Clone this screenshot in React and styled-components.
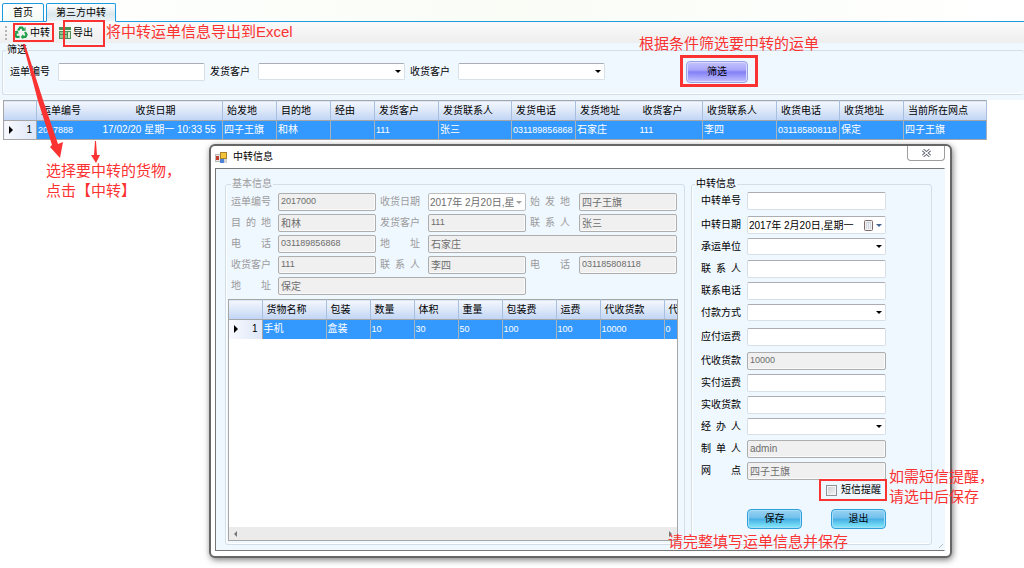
import React from "react";
import styled, { createGlobalStyle, css } from "styled-components";

const red = "#fb3232";

const Global = createGlobalStyle`
  *, *::before, *::after { box-sizing: border-box; }
  html, body { margin: 0; min-height: 100%; background: #fff; }
  body { position: relative; }
  body, input, select, button, table {
    font-family: "Liberation Sans", "Noto Sans CJK SC", sans-serif;
    font-size: 10px;
    line-height: 14px;
    color: #000;
  }
`;

const Page = styled.div`
  position: relative;
  min-height: 100vh;
  overflow: hidden;
`;

const Tabs = styled.nav`
  display: flex;
  gap: 2px;
  height: 22px;
  padding: 3px 2px 0;
  background: linear-gradient(90deg, #fff, #f9fdf6 50%, #fff);
  border-bottom: 1px solid #1c9be0;
`;

const Tab = styled.button`
  height: 19px;
  padding: 0 ${(p) => (p.$active ? "9px" : "10px")};
  border: 1px solid #1c9be0;
  border-bottom-color: ${(p) => (p.$active ? "#f6fafb" : "#1c9be0")};
  border-radius: 2px 2px 0 0;
  background: ${(p) =>
    p.$active ? "linear-gradient(#fff, #dbe7ec 60%, #eaf3f6)" : "linear-gradient(#fff, #f4fbf4)"};
`;

const Toolbar = styled.div`
  display: flex;
  align-items: center;
  gap: 5px;
  height: 21px;
  padding-left: 5px;
  background: linear-gradient(#fafafa, #eeeeee);
`;

const Grip = styled.i`
  width: 2px;
  height: 14px;
  background: repeating-linear-gradient(#b4b4b4 0 2px, transparent 2px 4px);
`;

const Tool = styled.button`
  display: flex;
  align-items: center;
  gap: 2px;
  padding: 0 2px;
  border: 0;
  background: none;
`;

const Group = styled.fieldset`
  min-width: 0;
  margin: 0;
  border: 1px solid #d2dfe8;
  border-radius: 3px;
  box-shadow: inset 0 -1px #fff, inset 1px 0 #fff;
  color: ${(p) => (p.$muted ? "#9b9b9b" : "#000")};

  legend {
    margin-left: 3px;
    padding: 0 1px;
  }
`;

const FilterPane = styled.section`
  padding: 0 0 5px 2px;
  background: #eff7ff;
`;

const FilterGroup = styled(Group)`
  border-right: 0;
  padding: 0 0 4px;
`;

const FilterForm = styled.form`
  display: flex;
  align-items: center;
  padding: 1px 7px 5px;
  height: 33px;
`;

const FilterLabel = styled.label`
  display: grid;
  grid-template-columns: 48px 147px;
  align-items: center;
  margin-right: 5px;
`;

const FilterButton = styled.button`
  width: 62px;
  height: 22px;
  margin-left: 76px;
  border: 1px solid #9aa2e6;
  border-radius: 4px;
  box-shadow: inset 0 0 0 1px #d9d9ff;
  background: linear-gradient(#c4c2fc, #a9a6fb 40%, #8280f6 50%, #c3c1ff);
`;

const box = css`
  width: 100%;
  min-width: 0;
  height: 18px;
  border: 1px solid #d7e0e8;
  border-top-color: #abadb3;
  border-radius: 2px;
  background-color: #fff;
  padding: 0 2px;
  line-height: 15px;
  outline: 0;
`;

const Field = styled.input`
  ${box}
  ${(p) => p.readOnly && css`
    border-color: #aeaeae;
    background-color: #f0f0f0;
    color: #6d6d6d;
    box-shadow: inset -1px -1px #fafafa;
    padding-bottom: 2px;
  `}
  font-size: ${(p) => (p.$num ? "9px" : "10px")};
`;

const SelectWrap = styled.span`
  position: relative;
  display: block;
  min-width: 0;
  height: 17px;

  &::after {
    content: "";
    position: absolute;
    right: 4px;
    top: 7px;
    border: 3px solid transparent;
    border-top-color: #000;
    border-bottom: 0;
  }
`;

const Select = styled.select`
  ${box}
  display: block;
  height: 17px;
  appearance: none;
`;

const DateBox = styled.span`
  ${box}
  display: flex;
  align-items: center;
  gap: ${(p) => (p.$muted ? "0" : "3px")};
  padding: 0 1px;
  color: ${(p) => (p.$muted ? "#6d6d6d" : "#000")};
  border-color: ${(p) => (p.$muted ? "#bdbdbd" : "")};

  input {
    flex: 1;
    min-width: 0;
    padding: 0;
    border: 0;
    background: none;
    color: inherit;
    line-height: 15px;
    outline: 0;
  }

  &::after {
    content: "";
    margin-right: 2px;
    border: 3px solid transparent;
    border-top-color: ${(p) => (p.$muted ? "#a0a0a0" : "#456391")};
    border-bottom: 0;
  }
`;

const Table = styled.table`
  width: ${(p) => p.$width}px;
  table-layout: fixed;
  border-collapse: collapse;
  border: 1px solid #a6a6a6;

  th, td {
    height: 19px;
    padding: 0 0 0 2px;
    overflow: hidden;
    white-space: nowrap;
    text-align: left;
    font-weight: 400;
  }
  thead th {
    height: 20px;
    padding-left: 4px;
    border: solid #a9bfe0;
    border-width: 1px 1px 1px 0;
    border-top-color: #a6a6a6;
    border-bottom-color: #a6a6a6;
    background: linear-gradient(#f4f7fd, #d9e5f8 55%, #bfd4f6);
  }
  td {
    padding-left: 1px;
    border-right: 1px solid #a9b3bd;
    background: #3399ff;
    color: #fff;
  }
  thead th.joined, td.joined { border-right: 0; }
  thead th.date { padding-left: 34px; }
  tbody th {
    border-right: 1px solid #a6a6a6;
    background: linear-gradient(90deg, #f7f9fd, #dde6f8);
    text-align: right;
    padding-right: 4px;
  }
`;

const Num = styled.span`
  font-size: 9px;
`;

const RowMark = styled.i`
  float: left;
  margin: 3px 0 0 3px;
  border: 4px solid transparent;
  border-left-color: #000;
  border-right: 0;
`;

const MainGrid = styled.main`
  padding-left: 3px;
`;

const Dialog = styled.section`
  position: absolute;
  top: 144px;
  left: 209px;
  width: 743px;
  padding: 0 5px 5px 4px;
  border: 2px solid #666;
  border-radius: 6px;
  background: #fff;
  box-shadow: 1px 2px 6px rgba(0, 0, 0, 0.5);
`;

const TitleBar = styled.header`
  display: flex;
  align-items: center;
  gap: 6px;
  height: 22px;

  h1 {
    flex: 1;
    margin: 0;
    font-size: 10px;
    font-weight: 400;
  }
`;

const Close = styled.button`
  display: grid;
  place-items: center;
  align-self: flex-start;
  width: 38px;
  height: 15px;
  padding: 0;
  border: 1px solid #9d9d9d;
  border-top: 0;
  border-radius: 0 0 4px 4px;
  background: #fff;
`;

const Client = styled.div`
  display: grid;
  grid-template-columns: 460px 241px;
  gap: 6px;
  padding: 8px 9px 5px;
  border: 1px solid #777;
  border-right-color: #eff7ff;
  background: #eff7ff;
`;

const BasicGroup = styled(Group)`
  padding: 2px 6px 3px 2px;
`;

const BasicForm = styled.form`
  display: grid;
  grid-template-columns: 50px 98px 52px 98px 53px 98px;
  row-gap: 3px;
  align-items: center;

  label {
    width: 40px;
    margin-left: 3px;
    text-align-last: justify;
  }
  label.next { margin-left: 4px; }
  .wide { grid-column: span 3; }
`;

const GoodsPane = styled.div`
  display: flex;
  flex-direction: column;
  height: 242px;
  margin-top: 4px;
  border: 1px solid #a6a6a6;
  border-top: 0;
  background: #fff;
  overflow: hidden;
`;

const GoodsTable = styled(Table)`
  border: 0;
`;

const ScrollTrack = styled.div`
  display: flex;
  align-items: center;
  justify-content: space-between;
  height: 13px;
  margin-top: auto;
  padding: 0 5px;
  background: #ebebeb;

  &::before, &::after {
    content: "";
    border: 3px solid transparent;
  }
  &::before { border-right-color: #777; border-left: 0; }
  &::after { border-left-color: #777; border-right: 0; }
`;

const TransferGroup = styled(Group)`
  padding: 1px 0 0;
`;

const TransferBody = styled.div`
  padding: 0 45px 0 9px;
`;

const TransferForm = styled.form`
  display: grid;
  grid-template-columns: 40px 139px;
  grid-template-rows: 24px repeat(4, 22px) 24px 24px repeat(5, 22px) 17px;
  column-gap: 6px;

  > label {
    height: 18px;
    line-height: 18px;
    white-space: nowrap;
    text-align-last: justify;
  }
`;

const CheckLabel = styled.label`
  display: flex;
  align-items: center;
  justify-content: flex-end;
  gap: 4px;
  margin-top: 4px;
  padding-right: 5px;

  input {
    width: 11px;
    height: 11px;
    margin: 0;
    appearance: none;
    border: 1px solid #8f9399;
    background: linear-gradient(135deg, #c9ccd0, #f8f8f8);
    box-shadow: inset 0 0 0 1px #f4f4f4;
  }
`;

const Actions = styled.div`
  display: flex;
  justify-content: space-between;
  margin: 12px 0 0 46px;
`;

const Action = styled.button`
  width: 55px;
  height: 20px;
  padding: 0;
  border: 1px solid #2f9fdc;
  border-radius: 4px;
  box-shadow: inset 0 0 0 1px #a5def6;
  background: linear-gradient(#9bd2f2, #6fc0ec 45%, #46aee5 50%, #86ecfb);
`;

const SizeGrip = styled.i`
  position: absolute;
  right: 7px;
  bottom: 8px;
  width: 6px;
  height: 6px;
  background: repeating-linear-gradient(135deg, transparent 0 2px, #b9c2c9 2px 3px);
  clip-path: polygon(100% 0, 100% 100%, 0 100%);
`;

const Mark = styled.div`
  position: absolute;
  left: ${(p) => p.$x}px;
  top: ${(p) => p.$y}px;
  width: ${(p) => p.$w}px;
  height: ${(p) => p.$h}px;
  border: ${(p) => p.$line || 2}px solid ${red};
  pointer-events: none;
`;

const Note = styled.p`
  position: absolute;
  left: ${(p) => p.$x}px;
  top: ${(p) => p.$y}px;
  margin: 0;
  font-size: 15px;
  line-height: 20px;
  white-space: nowrap;
  color: ${red};
`;

const Arrows = styled.svg`
  position: absolute;
  left: 0;
  top: 40px;
  pointer-events: none;
`;

const RecycleIcon = () => (
  <svg width="14" height="13" viewBox="0 0 14 13" fill="none" stroke="#1ea04a" strokeWidth="2.2">
    <path d="M4.2 4.4 6 1.6h2.2l1.4 2.3M11 6l1.6 2.8-1.2 2.1H8.3M5.6 10.9H2.4L1.3 8.8 3 6" />
    <path d="M8 4.2h3V1.6M9.2 9 7.6 10.9l1.6 1.7M1 5.8l2.4-.6.7 2.4" strokeWidth="1.2" />
  </svg>
);

const SheetIcon = () => (
  <svg width="12" height="12" viewBox="0 0 12 12">
    <rect width="12" height="12" fill="#4d8f57" />
    <rect y="3" width="12" height="1" fill="#e4f2e2" />
    <path d="M1 5h3v2H1zM5 5h3v2H5zM1 8h3v3H1zM5 8h3v3H5z" fill="#8fc48f" />
    <path d="M9 5h2v6H9z" fill="#d8f0cf" />
  </svg>
);

const FormIcon = () => (
  <svg width="12" height="11" viewBox="0 0 12 11">
    <rect x="0.5" y="2.5" width="5" height="7" fill="#e8e8e8" stroke="#b9b9b9" />
    <rect x="1" y="4" width="3" height="4" fill="#c2402b" />
    <rect x="8" y="7" width="4" height="4" fill="#d4d4d4" />
    <rect x="5" y="7" width="4" height="4" fill="#4d84d8" />
    <rect x="5.5" y="0.5" width="6" height="6" fill="#f6c33c" stroke="#a8842c" />
  </svg>
);

const CalendarIcon = () => (
  <svg width="9" height="11" viewBox="0 0 9 11">
    <rect x="0.5" y="0.5" width="8" height="10" rx="1" fill="#f3f3f3" stroke="#7d6b6b" />
    <path d="M2 4h5M2 6h5M2 8h5" stroke="#a9bccf" strokeDasharray="1 1" />
    <path d="M2 2.5h5" stroke="#c9d3dd" />
  </svg>
);

const CloseIcon = () => (
  <svg width="9" height="8" viewBox="0 0 9 8" fill="none">
    <path d="M1 1l7 6M8 1L1 7" stroke="#555b66" strokeWidth="3" />
    <path d="M1 1l7 6M8 1L1 7" stroke="#fff" strokeWidth="1.4" />
  </svg>
);

const waybillColumns = [
  ["运单编号", 65, "2017888", "joined"],
  ["收货日期", 121, "17/02/20 星期一 10:33 55", "date"],
  ["始发地", 54, "四子王旗"],
  ["目的地", 54, "和林"],
  ["经由", 44, ""],
  ["发货客户", 64, "111"],
  ["发货联系人", 73, "张三"],
  ["发货电话", 64, "031189856868"],
  ["发货地址", 63, "石家庄", "joined"],
  ["收货客户", 64, "111"],
  ["收货联系人", 74, "李四"],
  ["收货电话", 63, "031185808118"],
  ["收货地址", 64, "保定"],
  ["当前所在网点", 83, "四子王旗"],
];

const goodsColumns = [
  ["货物名称", 64, "手机"],
  ["包装", 44, "盒装"],
  ["数量", 44, "10"],
  ["体积", 44, "30"],
  ["重量", 44, "50"],
  ["包装费", 54, "100"],
  ["运费", 44, "100"],
  ["代收货款", 64, "10000"],
  ["代收", 44, "0"],
];

function Rows({ columns, lead }) {
  return (
    <>
      <colgroup>
        <col width={lead} />
        {columns.map((c) => <col key={c[0]} width={c[1]} />)}
      </colgroup>
      <thead>
        <tr>
          <th />
          {columns.map((c) => <th key={c[0]} className={c[3]}>{c[0]}</th>)}
        </tr>
      </thead>
      <tbody>
        <tr>
          <th><RowMark />1</th>
          {columns.map((c) => (
            <td key={c[0]} className={c[3]}>{/^\d+$/.test(c[2]) ? <Num>{c[2]}</Num> : c[2]}</td>
          ))}
        </tr>
      </tbody>
    </>
  );
}

function Drop({ id }) {
  return (
    <SelectWrap>
      <Select id={id}><option></option></Select>
    </SelectWrap>
  );
}

const basicFields = [
  ["运单编号", "2017000"],
  ["收货日期", "2017年 2月20日,星", "date"],
  ["始发地", "四子王旗"],
  ["目的地", "和林"],
  ["发货客户", "111"],
  ["联系人", "张三"],
  ["电话", "031189856868"],
  ["地址", "石家庄", "wide"],
  ["收货客户", "111"],
  ["联系人", "李四"],
  ["电话", "031185808118"],
  ["地址", "保定", "wide"],
];

const firstInRow = [0, 3, 6, 8, 11];

const transferFields = [
  ["中转单号", "text"],
  ["中转日期", "date"],
  ["承运单位", "select"],
  ["联系人", "text"],
  ["联系电话", "text"],
  ["付款方式", "select"],
  ["应付运费", "text"],
  ["代收货款", "fixed", "10000"],
  ["实付运费", "text"],
  ["实收货款", "text"],
  ["经办人", "select"],
  ["制单人", "fixed", "admin"],
  ["网点", "fixed", "四子王旗"],
];

/* Two-character and three-character labels are spaced out to the full label width. */
const spread = (t) => (t.length < 4 ? t.split("").join(" ") : t);

function TransferField({ id, kind, value }) {
  if (kind === "select") return <Drop id={id} />;
  if (kind === "date")
    return (
      <DateBox>
        <input id={id} defaultValue="2017年 2月20日,星期一" />
        <CalendarIcon />
      </DateBox>
    );
  return <Field id={id} readOnly={kind === "fixed"} defaultValue={value} $num={/^\d+$/.test(value || "")} />;
}

export default function App() {
  return (
    <Page>
      <Global />
      <Tabs>
        <Tab type="button">首页</Tab>
        <Tab type="button" $active>第三方中转</Tab>
      </Tabs>
      <Toolbar>
        <Grip />
        <Tool type="button"><RecycleIcon />中转</Tool>
        <Tool type="button"><SheetIcon />导出</Tool>
      </Toolbar>
      <FilterPane>
        <FilterGroup>
          <legend>筛选</legend>
          <FilterForm>
            <FilterLabel>运单编号<Field /></FilterLabel>
            <FilterLabel>发货客户<Drop /></FilterLabel>
            <FilterLabel>收货客户<Drop /></FilterLabel>
            <FilterButton type="button">筛选</FilterButton>
          </FilterForm>
        </FilterGroup>
      </FilterPane>
      <MainGrid>
        <Table $width={983}><Rows columns={waybillColumns} lead={33} /></Table>
      </MainGrid>

      <Dialog role="dialog" aria-labelledby="dialog-title">
        <TitleBar>
          <FormIcon />
          <h1 id="dialog-title">中转信息</h1>
          <Close type="button" aria-label="关闭"><CloseIcon /></Close>
        </TitleBar>
        <Client>
          <BasicGroup $muted>
            <legend>基本信息</legend>
            <BasicForm>
              {basicFields.map(([label, value, kind], i) => (
                <React.Fragment key={i}>
                  <label htmlFor={`basic-${i}`} className={firstInRow.includes(i) ? "" : "next"}>
                    {spread(label)}
                  </label>
                  {kind === "date" ? (
                    <DateBox $muted><input id={`basic-${i}`} readOnly defaultValue={value} /></DateBox>
                  ) : (
                    <Field
                      id={`basic-${i}`}
                      readOnly
                      defaultValue={value}
                      className={kind}
                      $num={/^\d+$/.test(value)}
                    />
                  )}
                </React.Fragment>
              ))}
            </BasicForm>
            <GoodsPane>
              <GoodsTable $width={479}><Rows columns={goodsColumns} lead={33} /></GoodsTable>
              <ScrollTrack />
            </GoodsPane>
          </BasicGroup>
          <TransferGroup>
            <legend>中转信息</legend>
            <TransferBody>
              <TransferForm>
                {transferFields.map(([label, kind, value], i) => (
                  <React.Fragment key={label}>
                    <label htmlFor={`transfer-${i}`}>{spread(label)}</label>
                    <TransferField id={`transfer-${i}`} kind={kind} value={value} />
                  </React.Fragment>
                ))}
              </TransferForm>
              <CheckLabel><input type="checkbox" />短信提醒</CheckLabel>
              <Actions>
                <Action type="button">保存</Action>
                <Action type="button">退出</Action>
              </Actions>
            </TransferBody>
          </TransferGroup>
        </Client>
        <SizeGrip />
      </Dialog>

      <Mark $x={13} $y={23} $w={41} $h={19} />
      <Mark $x={63} $y={20} $w={42} $h={27} />
      <Mark $x={680} $y={55} $w={78} $h={32} $line={3} />
      <Mark $x={819} $y={479} $w={68} $h={22} />
      <Note $x={106} $y={22}>将中转运单信息导出到Excel</Note>
      <Note $x={639} $y={34}>根据条件筛选要中转的运单</Note>
      <Note $x={46} $y={161}>选择要中转的货物，<br />点击【中转】</Note>
      <Note $x={889} $y={467}>如需短信提醒，<br />请选中后保存</Note>
      <Note $x={668} $y={532}>请完整填写运单信息并保存</Note>
      <Arrows width="110" height="124" viewBox="0 0 110 124" fill={red}>
        <path d="M23 4 38 61 52 105 50 107 60 118 63 102 58 104 43 60 25 4Z" />
        <path d="M95 101 94 115 91 115 96 123 100 115 97 115 96 101Z" />
      </Arrows>
    </Page>
  );
}
